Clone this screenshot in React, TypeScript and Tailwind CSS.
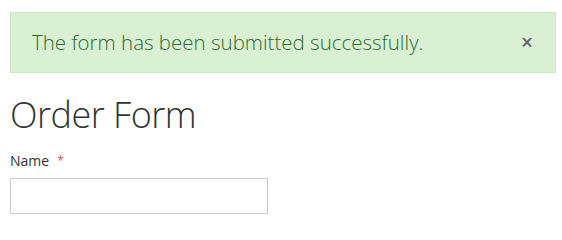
export default function App() {
  return (
    <div className="min-h-[231px] bg-white px-[10px] pt-[12px] font-['Open_Sans',sans-serif] text-[#333]">
      {/* Success alert */}
      <div className="flex h-[61px] w-[546px] items-center justify-between border border-[#cde8c3] bg-[#d9f0d3] pl-[21px] pr-[22px]">
        <p className="text-[20.5px] font-light text-[#2f6b2f]">
          The form has been submitted successfully.
        </p>
        <button className="text-[21px] font-semibold leading-none text-[#666]">×</button>
      </div>

      <h1 className="mt-[20px] text-[36px] font-light leading-[44px] tracking-[-0.5px] text-[#333]">
        Order Form
      </h1>

      <label className="mt-[15px] flex items-start gap-[8px] text-[14px] leading-[18px] text-[#333]">
        Name
        <span className="text-[12px] text-[#d9534f]">*</span>
      </label>

      <input
        type="text"
        className="mt-[8px] block h-[36px] w-[258px] border border-[#ccc] bg-white px-2 text-[14px] outline-none"
      />
    </div>
  )
}
